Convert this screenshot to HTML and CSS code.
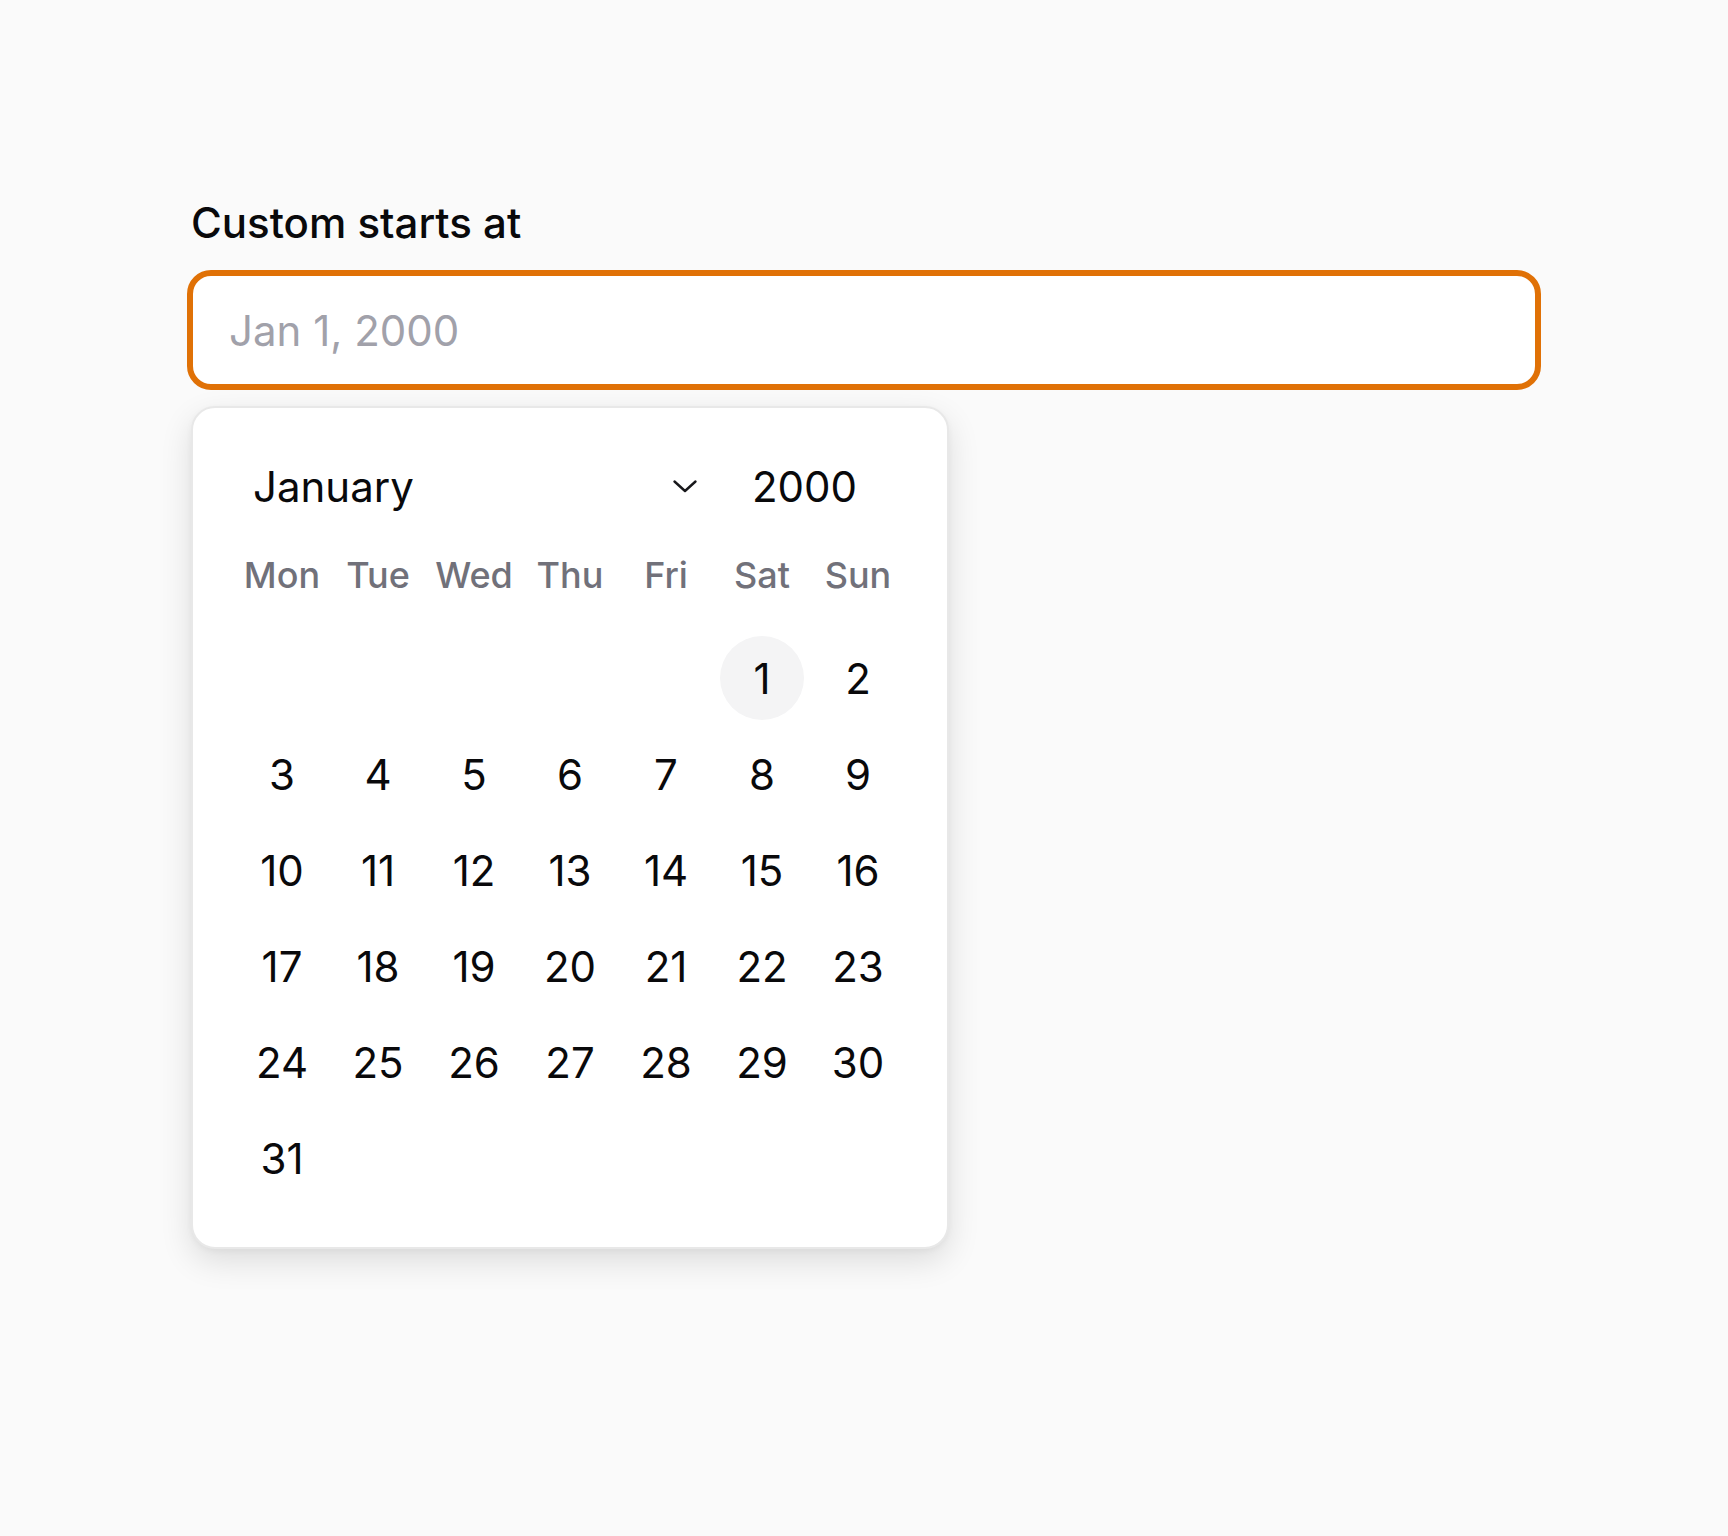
FILE: index.html
```html
<!doctype html>
<html>
  <head>
    <title>Date picker</title>
    <link rel="stylesheet" href="styles.css">
  </head>
  <body>
    <div class='container'>
      <label class='field-label' for='starts-at'>Custom starts at</label>
      <input id='starts-at' class='date-input' type='text' placeholder='Jan 1, 2000'>

      <div class='calendar'>
        <div class='calendar-header'>
          <div class='month-select'>
            <span>January</span>
            <svg class='chevron' width='26' height='14' viewBox='0 0 26 14'>
              <path d='M2.5 2.5 L13 12 L23.5 2.5' fill='none' stroke='#18181b' stroke-width='2.4' stroke-linecap='round' stroke-linejoin='round'/>
            </svg>
          </div>
          <span class='year'>2000</span>
        </div>

        <div class='weekdays'>
          <div>Mon</div>
          <div>Tue</div>
          <div>Wed</div>
          <div>Thu</div>
          <div>Fri</div>
          <div>Sat</div>
          <div>Sun</div>
        </div>

        <div class='days' id='days'></div>
      </div>
    </div>

    <script>
      // january 2000 starts on a saturday (6th column)
      let days = document.getElementById('days');
      for (let i = 1; i <= 31; i++) {
        let cell = document.createElement('div');
        cell.className = 'day';
        if (i === 1) {
          cell.classList.add('first');
          cell.classList.add('selected');
        }
        let num = document.createElement('span');
        num.textContent = i;
        cell.appendChild(num);
        days.appendChild(cell);
      }
    </script>
  </body>
</html>
```

FILE: styles.css
```css
body {
  margin: 0;
  min-height: 1536px;
  background-color: #fafafa;
  font-family: Inter, "Noto Sans", sans-serif;
  color: #09090b;
}

.container {
  width: 1354px;
  margin: 0 auto;
  padding-top: 195px;
}

/* label above the input */
.field-label {
  display: block;
  margin-left: 4px;
  margin-bottom: 19px;
  font-size: 42px;
  line-height: 56px;
  font-weight: 500;
}

.date-input {
  box-sizing: border-box;
  display: block;
  width: 100%;
  height: 120px;
  padding: 0 36px;
  border: 6px solid #e07106;
  border-radius: 24px;
  background-color: #fff;
  font-family: Inter, "Noto Sans", sans-serif;
  font-size: 42px;
  color: #09090b;
  outline: none;
}

.date-input::placeholder {
  color: #a1a1aa;
}

/* popup calendar */
.calendar {
  box-sizing: border-box;
  width: 758px;
  margin-top: 16px;
  margin-left: 4px;
  padding: 41px;
  border: 2px solid #e8e8e8;
  border-radius: 24px;
  background-color: #fff;
  box-shadow: 0 12px 32px rgba(0, 0, 0, 0.12), 0 2px 6px rgba(0, 0, 0, 0.04);
}

.calendar-header {
  display: flex;
  align-items: center;
  height: 74px;
  margin-bottom: 4px;
  padding-left: 19px;
  font-size: 42px;
}

.month-select {
  display: flex;
  align-items: center;
  justify-content: space-between;
  width: 445px;
}

.chevron {
  display: block;
}

.year {
  margin-left: 54px;
}

.weekdays {
  display: grid;
  grid-template-columns: repeat(7, 96px);
  height: 96px;
  margin-bottom: 7px;
  align-items: center;
  justify-items: center;
  font-size: 36px;
  font-weight: 500;
  color: #71717a;
}

.days {
  display: grid;
  grid-template-columns: repeat(7, 96px);
  grid-auto-rows: 96px;
}

.day {
  display: flex;
  align-items: center;
  justify-content: center;
  font-size: 42px;
}

.day.first {
  grid-column-start: 6;
}

.day > span {
  display: flex;
  align-items: center;
  justify-content: center;
  width: 84px;
  height: 84px;
  border-radius: 50%;
}

.day.selected > span {
  background-color: #f4f4f5;
}
```
